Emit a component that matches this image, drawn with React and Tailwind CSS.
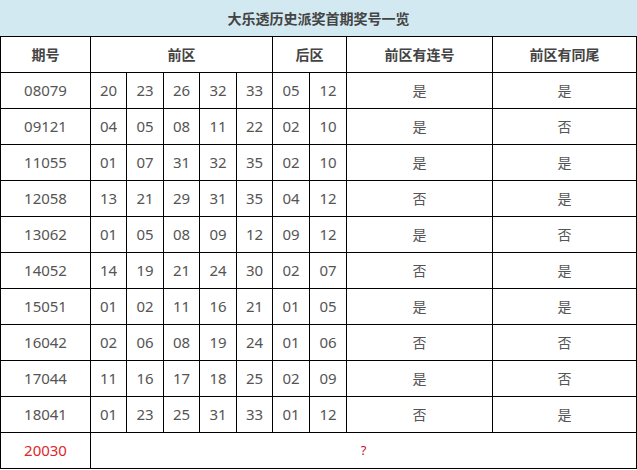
import React from 'react';

const rows = [
  ['08079', ['20', '23', '26', '32', '33'], ['05', '12'], '是', '是'],
  ['09121', ['04', '05', '08', '11', '22'], ['02', '10'], '是', '否'],
  ['11055', ['01', '07', '31', '32', '35'], ['02', '10'], '是', '是'],
  ['12058', ['13', '21', '29', '31', '35'], ['04', '12'], '否', '是'],
  ['13062', ['01', '05', '08', '09', '12'], ['09', '12'], '是', '否'],
  ['14052', ['14', '19', '21', '24', '30'], ['02', '07'], '否', '是'],
  ['15051', ['01', '02', '11', '16', '21'], ['01', '05'], '是', '是'],
  ['16042', ['02', '06', '08', '19', '24'], ['01', '06'], '否', '否'],
  ['17044', ['11', '16', '17', '18', '25'], ['02', '09'], '是', '否'],
  ['18041', ['01', '23', '25', '31', '33'], ['01', '12'], '否', '是'],
];

const cell = 'bg-white flex items-center justify-center';

function App() {
  return (
    <div
      className="w-[637px] bg-white text-[#555]"
      style={{ fontFamily: '"Noto Sans", "Noto Sans CJK SC", sans-serif' }}
    >
      {/* 标题 */}
      <div className="h-[36px] bg-[#d3e9f1] flex items-center justify-center text-[14px] font-bold text-[#444]">
        大乐透历史派奖首期奖号一览
      </div>

      <div className="grid grid-cols-[89px_35px_36px_35px_36px_35px_36px_36px_145px_143px] auto-rows-[35px] gap-px bg-black p-px text-[15px]">
        {/* 表头 */}
        <div className={`${cell} font-bold text-[14px] text-[#444]`}>期号</div>
        <div className={`${cell} col-span-5 font-bold text-[14px] text-[#444]`}>前区</div>
        <div className={`${cell} col-span-2 font-bold text-[14px] text-[#444]`}>后区</div>
        <div className={`${cell} font-bold text-[14px] text-[#444]`}>前区有连号</div>
        <div className={`${cell} font-bold text-[14px] text-[#444]`}>前区有同尾</div>

        {rows.map(([issue, front, back, lian, tong]) => (
          <React.Fragment key={issue}>
            <div className={cell}>{issue}</div>
            {front.map((n, i) => (
              <div key={'f' + i} className={cell}>{n}</div>
            ))}
            {back.map((n, i) => (
              <div key={'b' + i} className={cell}>{n}</div>
            ))}
            <div className={`${cell} text-[14px]`}>{lian}</div>
            <div className={`${cell} text-[14px]`}>{tong}</div>
          </React.Fragment>
        ))}

        {/* 本期 */}
        <div className={`${cell} text-[#e0262b]`}>20030</div>
        <div className={`${cell} col-span-9 text-[#c8102e] text-[13px]`}>?</div>
      </div>
    </div>
  );
}

export default App;
